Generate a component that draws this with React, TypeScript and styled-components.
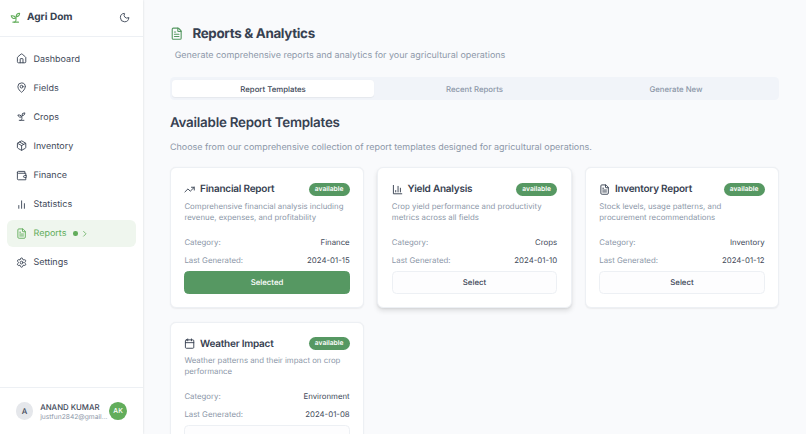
import { ComponentType, ReactNode } from "react";
import styled, { createGlobalStyle, css } from "styled-components";
import {
  Calendar,
  ChevronRight,
  FileText,
  House,
  MapPin,
  Moon,
  Package,
  Settings,
  TrendingUp,
} from "lucide-react";

const colors = {
  background: "#f9fafc",
  surface: "#ffffff",
  border: "#edf0f4",
  text: "#3e4858",
  heading: "#374151",
  muted: "#8c97a8",
  primary: "#569862",
  agri: "#62ad5b",
  agriLight: "#eff6ee",
  tabs: "#f1f4f9",
};

const GlobalStyle = createGlobalStyle`
  * {
    box-sizing: border-box;
  }

  body {
    margin: 0;
    overflow: hidden;
    background: ${colors.background};
    color: ${colors.text};
    font-family: Inter, "Liberation Sans", sans-serif;
    text-rendering: geometricPrecision;
  }

  button {
    font-family: inherit;
    text-rendering: inherit;
    cursor: pointer;
  }

  svg {
    flex-shrink: 0;
  }
`;

const Layout = styled.div`
  display: flex;
  height: 434px;
  overflow: hidden;
`;

const Sidebar = styled.aside`
  display: flex;
  flex-direction: column;
  flex: 0 0 143px;
  min-width: 0;
  background: ${colors.surface};
  box-shadow: 0 0 2px rgba(30, 41, 59, 0.16);
`;

const SidebarHeader = styled.div`
  display: flex;
  align-items: center;
  justify-content: space-between;
  height: 36.5px;
  padding: 0 13px 1px 9px;
  border-bottom: 1px solid ${colors.border};
`;

const Brand = styled.div`
  display: flex;
  align-items: center;
  gap: 4.5px;
  color: ${colors.heading};
  font-size: 10.1px;
  font-weight: 700;
  line-height: 16px;

  svg {
    color: ${colors.agri};
  }
`;

const ThemeToggle = styled.button`
  display: flex;
  padding: 0;
  border: 0;
  background: none;
  color: ${colors.text};
`;

const Nav = styled.nav`
  display: flex;
  flex: 1;
  flex-direction: column;
  gap: 2.2px;
  padding: 8.9px 7px;
`;

const NavItem = styled.a<{ $active?: boolean }>`
  display: flex;
  align-items: center;
  height: 26.9px;
  padding-left: 8.6px;
  border-radius: 6px;
  color: ${colors.text};
  font-size: 9px;
  line-height: 13.4px;

  ${({ $active }) =>
    $active &&
    css`
      background: ${colors.agriLight};
      color: ${colors.agri};
    `}
`;

const NavLabel = styled.span`
  margin-left: 6.7px;
  padding-top: 1.2px;
`;

const ActiveDot = styled.span`
  width: 4.4px;
  height: 4.4px;
  margin: 0 2px 0 6.7px;
  border-radius: 50%;
  background: ${colors.agri};
`;

const UserPanel = styled.div`
  display: flex;
  align-items: center;
  height: 47px;
  padding: 0 16px 0 15.6px;
  border-top: 1px solid ${colors.border};
`;

const Avatar = styled.div<{ $filled?: boolean }>`
  display: flex;
  align-items: center;
  justify-content: center;
  flex: 0 0 17.8px;
  height: 17.8px;
  border-radius: 50%;
  background: ${({ $filled }) => ($filled ? colors.agri : "#e5e7eb")};
  color: ${({ $filled }) => ($filled ? "#ffffff" : colors.text)};
  font-size: ${({ $filled }) => ($filled ? "6.8px" : "7.8px")};
  font-weight: 500;
`;

const UserInfo = styled.div`
  flex: 1;
  min-width: 0;
  margin: 1px 0.6px 0 6.8px;
`;

const UserName = styled.div`
  font-size: 7.8px;
  font-weight: 500;
  line-height: 11px;
  white-space: nowrap;
`;

const UserEmail = styled.div`
  color: ${colors.muted};
  font-size: 6.7px;
  line-height: 9px;
  white-space: nowrap;
`;

const Main = styled.main`
  flex: 1;
  min-width: 0;
  padding: 24.5px 27px 0;
`;

const PageTitle = styled.h1`
  display: flex;
  align-items: center;
  gap: 9px;
  height: 18px;
  margin: 0;
  color: ${colors.heading};
  font-size: 13.4px;
  font-weight: 700;
  letter-spacing: -0.33px;

  svg {
    color: ${colors.primary};
  }
`;

const PageSubtitle = styled.p`
  margin: 6.2px 0 0 4.7px;
  color: ${colors.muted};
  font-size: 8.95px;
  line-height: 14px;
`;

const TabList = styled.div`
  display: grid;
  grid-template-columns: repeat(3, 1fr);
  height: 22.3px;
  margin-top: 14.7px;
  padding: 2.3px;
  border-radius: 4.5px;
  background: ${colors.tabs};
`;

const Tab = styled.button<{ $active?: boolean }>`
  padding: 0;
  border: 0;
  border-radius: 3.4px;
  background: ${({ $active }) => ($active ? colors.surface : "transparent")};
  box-shadow: ${({ $active }) =>
    $active ? "0 0.5px 1px rgba(0, 0, 0, 0.05)" : "none"};
  color: ${({ $active }) => ($active ? colors.text : colors.muted)};
  font-size: 7.8px;
  font-weight: 500;
`;

const SectionTitle = styled.h2`
  margin: 14.3px 0 0;
  color: ${colors.heading};
  font-size: 13.4px;
  font-weight: 600;
  line-height: 18px;
  letter-spacing: -0.24px;
`;

const SectionText = styled.p`
  margin: 9px 0 12.5px;
  color: ${colors.muted};
  font-size: 8.96px;
  line-height: 14px;
`;

const TemplateGrid = styled.div`
  display: grid;
  grid-template-columns: repeat(3, 1fr);
  gap: 13.4px;
`;

const Card = styled.article<{ $raised?: boolean }>`
  height: 140.9px;
  padding: 13.4px 13.4px 0;
  border: 0.6px solid ${colors.border};
  border-radius: 6px;
  background: ${colors.surface};
  box-shadow: ${({ $raised }) =>
    $raised
      ? "0 3px 5px rgba(0, 0, 0, 0.11), 0 1px 2px rgba(0, 0, 0, 0.06)"
      : "0 0.5px 1.5px rgba(0, 0, 0, 0.06)"};
`;

const CardHeader = styled.div`
  display: flex;
  align-items: center;
  justify-content: space-between;
  height: 15px;
`;

const CardTitle = styled.h3`
  display: flex;
  align-items: center;
  gap: 4.5px;
  margin: 0;
  color: ${colors.heading};
  font-size: 10px;
  font-weight: 600;
  letter-spacing: -0.24px;
`;

const Badge = styled.span`
  padding: 0 6.2px;
  border-radius: 7px;
  background: ${colors.primary};
  color: #ffffff;
  font-size: 6.7px;
  font-weight: 600;
  line-height: 12.3px;
`;

const CardDescription = styled.p`
  height: 22.4px;
  margin: 3.9px 0 13.4px;
  color: ${colors.muted};
  font-size: 7.82px;
  line-height: 11.2px;
`;

const Details = styled.div`
  display: grid;
  gap: 6.7px;
  margin-bottom: 5.4px;
`;

const Detail = styled.div`
  display: flex;
  justify-content: space-between;
  font-size: 7.82px;
  line-height: 11.3px;
`;

const DetailLabel = styled.span`
  color: ${colors.muted};
`;

const SelectButton = styled.button<{ $selected?: boolean }>`
  display: block;
  width: 100%;
  height: 22.4px;
  padding: 0;
  border: 1px solid ${({ $selected }) => ($selected ? colors.primary : colors.border)};
  border-radius: 4.5px;
  background: ${({ $selected }) => ($selected ? colors.primary : "#fdfdfe")};
  color: ${({ $selected }) => ($selected ? "#ffffff" : colors.text)};
  font-size: 7.82px;
  font-weight: 500;
`;

interface IconProps {
  size?: number | string;
}

const OutlineIcon = ({ size = 24, children }: IconProps & { children: ReactNode }) => (
  <svg
    width={size}
    height={size}
    viewBox="0 0 24 24"
    fill="none"
    stroke="currentColor"
    strokeWidth={2}
    strokeLinecap="round"
    strokeLinejoin="round"
  >
    {children}
  </svg>
);

const SproutIcon = ({ size }: IconProps) => (
  <OutlineIcon size={size}>
    <path d="M7 20h10" />
    <path d="M10 20c5.5-2.5.8-6.4 3-10" />
    <path d="M9.5 9.4c1.1.8 1.8 2.2 2.3 3.7-2 .4-3.5.4-4.8-.3-1.2-.6-2.3-1.9-3-4.2 2.8-.5 4.4 0 5.5.8z" />
    <path d="M14.1 6a7 7 0 0 0-1.1 4c1.9-.1 3.3-.6 4.3-1.4 1-1 1.6-2.3 1.7-4.6-2.7.1-4 1-4.9 2z" />
  </OutlineIcon>
);

const WalletIcon = ({ size }: IconProps) => (
  <OutlineIcon size={size}>
    <path d="M21 12V7H5a2 2 0 0 1 0-4h14v4" />
    <path d="M3 5v14a2 2 0 0 0 2 2h16v-5" />
    <path d="M18 12a2 2 0 0 0 0 4h4v-4Z" />
  </OutlineIcon>
);

const StatisticsIcon = ({ size }: IconProps) => (
  <OutlineIcon size={size}>
    <path d="M18 20V10" />
    <path d="M12 20V4" />
    <path d="M6 20v-6" />
  </OutlineIcon>
);

const BarChartIcon = ({ size }: IconProps) => (
  <OutlineIcon size={size}>
    <path d="M3 3v18h18" />
    <path d="M18 17V9" />
    <path d="M13 17V5" />
    <path d="M8 17v-3" />
  </OutlineIcon>
);

interface NavEntry {
  label: string;
  icon: ComponentType<IconProps>;
}

const navEntries: NavEntry[] = [
  { label: "Dashboard", icon: House },
  { label: "Fields", icon: MapPin },
  { label: "Crops", icon: SproutIcon },
  { label: "Inventory", icon: Package },
  { label: "Finance", icon: WalletIcon },
  { label: "Statistics", icon: StatisticsIcon },
  { label: "Reports", icon: FileText },
  { label: "Settings", icon: Settings },
];

interface Template {
  title: string;
  icon: ComponentType<IconProps>;
  description: string;
  category: string;
  lastGenerated: string;
}

const templates: Template[] = [
  {
    title: "Financial Report",
    icon: TrendingUp,
    description:
      "Comprehensive financial analysis including revenue, expenses, and profitability",
    category: "Finance",
    lastGenerated: "2024-01-15",
  },
  {
    title: "Yield Analysis",
    icon: BarChartIcon,
    description: "Crop yield performance and productivity metrics across all fields",
    category: "Crops",
    lastGenerated: "2024-01-10",
  },
  {
    title: "Inventory Report",
    icon: FileText,
    description: "Stock levels, usage patterns, and procurement recommendations",
    category: "Inventory",
    lastGenerated: "2024-01-12",
  },
  {
    title: "Weather Impact",
    icon: Calendar,
    description: "Weather patterns and their impact on crop performance",
    category: "Environment",
    lastGenerated: "2024-01-08",
  },
];

const tabs = ["Report Templates", "Recent Reports", "Generate New"];

const AppSidebar = () => (
  <Sidebar>
    <SidebarHeader>
      <Brand>
        <SproutIcon size={13.4} />
        Agri Dom
      </Brand>
      <ThemeToggle aria-label="Toggle theme">
        <Moon size={11.2} />
      </ThemeToggle>
    </SidebarHeader>
    <Nav>
      {navEntries.map(({ label, icon: Icon }) => {
        const active = label === "Reports";
        return (
          <NavItem key={label} $active={active}>
            <Icon size={11.2} />
            <NavLabel>{label}</NavLabel>
            {active && (
              <>
                <ActiveDot />
                <ChevronRight size={9.6} />
              </>
            )}
          </NavItem>
        );
      })}
    </Nav>
    <UserPanel>
      <Avatar>A</Avatar>
      <UserInfo>
        <UserName>ANAND KUMAR</UserName>
        <UserEmail>justfun2842@gmail...</UserEmail>
      </UserInfo>
      <Avatar $filled>AK</Avatar>
    </UserPanel>
  </Sidebar>
);

interface TemplateCardProps {
  template: Template;
  selected: boolean;
  raised: boolean;
}

const TemplateCard = ({ template, selected, raised }: TemplateCardProps) => {
  const Icon = template.icon;

  return (
    <Card $raised={raised}>
      <CardHeader>
        <CardTitle>
          <Icon size={11.2} />
          {template.title}
        </CardTitle>
        <Badge>available</Badge>
      </CardHeader>
      <CardDescription>{template.description}</CardDescription>
      <Details>
        <Detail>
          <DetailLabel>Category:</DetailLabel>
          <span>{template.category}</span>
        </Detail>
        <Detail>
          <DetailLabel>Last Generated:</DetailLabel>
          <span>{template.lastGenerated}</span>
        </Detail>
      </Details>
      <SelectButton $selected={selected}>
        {selected ? "Selected" : "Select"}
      </SelectButton>
    </Card>
  );
};

export const App = () => (
  <>
    <GlobalStyle />
    <Layout>
      <AppSidebar />
      <Main>
        <PageTitle>
          <FileText size={13.4} />
          Reports &amp; Analytics
        </PageTitle>
        <PageSubtitle>
          Generate comprehensive reports and analytics for your agricultural operations
        </PageSubtitle>
        <TabList>
          {tabs.map((tab, index) => (
            <Tab key={tab} $active={index === 0}>
              {tab}
            </Tab>
          ))}
        </TabList>
        <SectionTitle>Available Report Templates</SectionTitle>
        <SectionText>
          Choose from our comprehensive collection of report templates designed for
          agricultural operations.
        </SectionText>
        <TemplateGrid>
          {templates.map((template, index) => (
            <TemplateCard
              key={template.title}
              template={template}
              selected={index === 0}
              raised={index === 1}
            />
          ))}
        </TemplateGrid>
      </Main>
    </Layout>
  </>
);

export default App;
